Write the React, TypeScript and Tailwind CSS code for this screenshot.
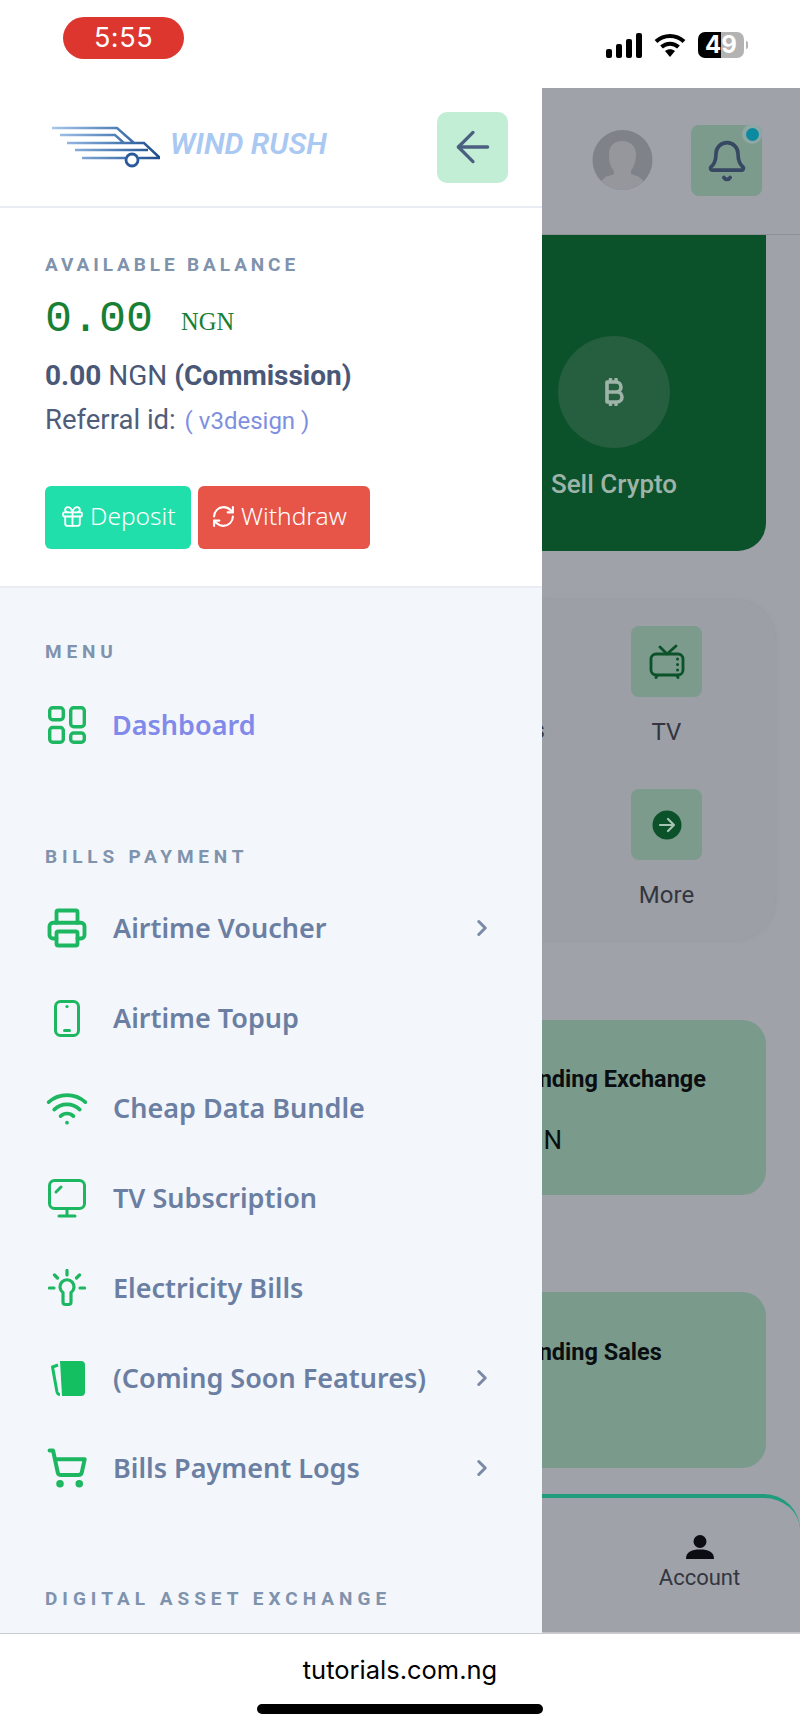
import React from "react";
import { ArrowLeft, Bell, ChevronRight, Gift, Printer, RefreshCw, ShoppingCart, Wifi } from "lucide-react";

const green = "#1cb760";
const DashIcon = () => (
  <svg width="38" height="38" viewBox="0 0 38 38" fill="none" stroke={green} strokeWidth="3.400" strokeLinejoin="round">
    <rect x="1.700" y="1.700" width="13.600" height="12" rx="3" />
    <rect x="22.700" y="1.700" width="13.600" height="19" rx="3" />
    <rect x="1.700" y="21.500" width="13.600" height="14.800" rx="3" />
    <rect x="22.700" y="27" width="13.600" height="9.300" rx="3" />
  </svg>
);
const Phone = () => (
  <svg width="26" height="37" viewBox="0 0 26 37" fill="none" stroke={green} strokeWidth="3" strokeLinecap="round">
    <rect x="1.500" y="1.500" width="23" height="34" rx="5" />
    <path d="M13 6.500h.01" strokeWidth="3.200" />
    <path d="M10.500 30.500h5" strokeWidth="3" />
  </svg>
);
const Monitor = () => (
  <svg width="38" height="39" viewBox="0 0 38 39" fill="none" stroke={green} strokeWidth="3" strokeLinecap="round" strokeLinejoin="round">
    <rect x="1.500" y="1.500" width="35" height="28" rx="5" />
    <path d="M19 30v6.500M11 37h16M8 13l5-5" />
  </svg>
);
const Bulb = () => (
  <svg width="38" height="38" viewBox="0 0 38 38" fill="none" stroke={green} strokeWidth="3.200" strokeLinecap="round" strokeLinejoin="round">
    <path d="M19 1.500v4.500M6.500 6l3 3M31.500 6l-3 3M1.500 19h4.500M32 19h4.500" />
    <path d="M15 27v-3.500a7 7 0 1 1 8 0V27v6a2.500 2.500 0 0 1-2.500 2.500h-3A2.500 2.500 0 0 1 15 33z" />
  </svg>
);
const Cards = () => (
  <svg width="34" height="35" viewBox="0 0 34 35">
    <path d="M9 0h21a4 4 0 0 1 4 4v27a4 4 0 0 1-4 4H11z" fill="#14bf62" />
    <path d="M7 4 1.500 6l4.500 25c.5 2 2 2.500 3 2.500" fill="none" stroke="#14bf62" strokeWidth="3" strokeLinejoin="round" />
  </svg>
);
const Logo = () => (
  <svg width="108" height="42" viewBox="0 0 108 42" fill="none" strokeWidth="2.400">
    <defs>
      <linearGradient id="w" gradientUnits="userSpaceOnUse" x1="0" y1="0" x2="108" y2="0">
        <stop offset="0" stopColor="#a9c6ea" />
        <stop offset="0.6" stopColor="#4f7fb8" />
        <stop offset="1" stopColor="#1d4a8c" />
      </linearGradient>
    </defs>
    <path stroke="url(#w)" d="M0 2h65l17 15h10l16 15H87M8 9h55l9 8M15 17h77M23 24h73M30 32h43" />
    <circle cx="80" cy="34" r="6" stroke="#2a5a9c" strokeWidth="2.800" fill="#fff" />
  </svg>
);
const Avatar = () => (
  <svg width="61" height="60" viewBox="0 0 61 60">
    <circle cx="30.500" cy="30" r="30" fill="#7f8288" />
    <clipPath id="av"><circle cx="30.500" cy="30" r="30" /></clipPath>
    <g clipPath="url(#av)">
      <path d="M5 60c2-12 12-14 17-16v-3c-5-6-5-13-5-17 0-9 6-13 13-13s14 4 14 13c0 5-1 11-5 17v3c6 2 14 4 17 16z" fill="#95979c" />
      <path d="M14 46 30 53l16-7 10 14H5z" fill="#95979c" />
    </g>
  </svg>
);
const TvIcon = () => (
  <svg width="36" height="35" viewBox="0 0 36 35" fill="none" stroke="#0b5129" strokeWidth="2.800" strokeLinecap="round" strokeLinejoin="round">
    <rect x="2" y="10" width="32" height="21" rx="5" />
    <path d="M11 3l7 7 9-8M7 33.500l1-2M29 33.500l-1-2" />
    <path d="M28.500 15h.01M28.500 20.500h.01M28.500 26h.01" strokeWidth="3" />
  </svg>
);
const MoreIcon = () => (
  <svg width="30" height="30" viewBox="0 0 30 30" fill="none" stroke="#a6c4b4" strokeWidth="2.200" strokeLinecap="round" strokeLinejoin="round">
    <circle cx="15" cy="15" r="14.500" fill="#0b5129" stroke="none" />
    <path d="M8 15h14M16 9l6 6-6 6" />
  </svg>
);
const Btc = () => (
  <svg width="20" height="28" viewBox="0 0 20 28" fill="none" stroke="#9fb4a8" strokeWidth="3.600" strokeLinejoin="round" strokeLinecap="round">
    <path d="M3 4h9a4.500 4.500 0 0 1 0 10H3zM3 14h10a5 5 0 0 1 0 10H3zM3 4v20M6.500 1.500v2.500M12 1.500v2.500M6.500 24v2.500M12 24v2.500" />
  </svg>
);
const UserIcon = () => (
  <svg width="28" height="24" viewBox="0 0 28 24" fill="#0b0d12">
    <circle cx="14" cy="6.500" r="6.500" />
    <path d="M0 24c0-7 5-9.500 14-9.500S28 17 28 24z" />
  </svg>
);

const bills = [
  { icon: <Printer size={42} color={green} strokeWidth={2.200} className="-ml-[2px]" />, label: "Airtime Voucher", arrow: true },
  { icon: <div className="pl-[6px]"><Phone /></div>, label: "Airtime Topup" },
  { icon: <Wifi size={44} color={green} strokeWidth={2} className="-ml-[3px]" />, label: "Cheap Data Bundle" },
  { icon: <Monitor />, label: "TV Subscription" },
  { icon: <Bulb />, label: "Electricity Bills" },
  { icon: <div className="pl-[3px]"><Cards /></div>, label: "(Coming Soon Features)", arrow: true },
  { icon: <ShoppingCart size={42} color={green} strokeWidth={2.300} className="-ml-[2px]" />, label: "Bills Payment Logs", arrow: true },
];

const Label = ({ children, className }: { children: React.ReactNode; className: string }) => (
  <div className={`text-[19px] leading-[22px] font-bold text-[#8093ac] whitespace-nowrap font-['Roboto',sans-serif] ${className}`}>{children}</div>
);

export default function App() {
  return (
    <div className="w-[800px] h-[1730px] flex flex-col bg-white overflow-hidden font-['Roboto',sans-serif]">
      <div className="h-[88px] shrink-0 flex items-start justify-between pt-[17px] pl-[63px] pr-[52px]">
        <div className="w-[121px] h-[42px] rounded-[21px] bg-[#dc362e] flex items-center justify-center text-white text-[27px] tracking-[0.02em] font-['Inter',sans-serif]">5:55</div>
        <div className="flex items-center gap-[12px] mt-[15px]">
          <svg width="36" height="25" viewBox="0 0 36 25" fill="#000">
            <rect x="0" y="16" width="6" height="9" rx="2" />
            <rect x="10" y="11" width="6" height="14" rx="2" />
            <rect x="20" y="6" width="6" height="19" rx="2" />
            <rect x="30" y="0" width="6" height="25" rx="2" />
          </svg>
          <svg width="32" height="24" viewBox="0 0 32 24" fill="none" stroke="#000" strokeWidth="4">
            <path d="M2 8.500c8-7.500 20-7.500 28 0M7.500 14c5-4.500 12-4.500 17 0" />
            <path d="M16 24l-5-6c3-2.500 7-2.500 10 0z" fill="#000" stroke="none" />
          </svg>
          <div className="flex items-center gap-[2px]">
            <div className="w-[46px] h-[26px] rounded-[7px] bg-[linear-gradient(90deg,#000_50%,#b3b3b3_50%)] flex items-center justify-center text-white font-bold text-[24px] font-['Inter',sans-serif]">49</div>
            <div className="w-[2px] h-[8px] rounded-r bg-[#b3b3b3]" />
          </div>
        </div>
      </div>

      <div className="flex-1 flex min-h-0">
        <aside className="w-[542px] shrink-0 bg-[#f3f6fb] overflow-hidden flex flex-col">
          <div className="h-[120px] shrink-0 bg-white border-b-2 border-[#e9ecf2] flex items-center justify-between pl-[52px] pr-[34px]">
            <div className="flex items-center gap-[10px]">
              <Logo />
              <span className="text-[30px] leading-[36px] mb-[6px] font-semibold italic text-[#a9c8f2] whitespace-nowrap">WIND RUSH</span>
            </div>
            <div className="w-[71px] h-[71px] rounded-[10px] bg-[#c3eed6] flex items-center justify-center">
              <ArrowLeft size={50} color="#4b6080" strokeWidth={1.600} />
            </div>
          </div>

          <div className="h-[380px] shrink-0 bg-white border-b-2 border-[#e9ecf2] pl-[45px] pt-[46px]">
            <Label className="tracking-[3.900px]">AVAILABLE BALANCE</Label>
            <div className="flex items-baseline mt-[18px] text-[#178034]">
              <span className="font-['Liberation_Mono',monospace] text-[45px] leading-[52px]">0.00</span>
              <span className="font-['Liberation_Serif',serif] text-[24.5px] ml-[28px] relative -top-[1px]">NGN</span>
            </div>
            <div className="text-[28px] leading-[36px] mt-[12px] text-[#4a5878] whitespace-nowrap">
              <b>0.00</b> NGN <b>(Commission)</b>
            </div>
            <div className="text-[27.5px] leading-[36px] mt-[8px] text-[#4f5d7a] whitespace-nowrap">
              Referral id: <span className="text-[24px] text-[#7f8fdf] ml-[2px]">( v3design )</span>
            </div>
            <div className="flex gap-[7px] mt-[47px]">
              <div className="w-[146px] h-[63px] pb-[3px] pl-[15px] rounded-[6px] bg-[#20dfaa] flex items-center gap-[5px] text-white text-[24.5px] font-['Noto_Sans',sans-serif] font-light">
                <Gift size={25} strokeWidth={1.800} />Deposit
              </div>
              <div className="w-[172px] h-[63px] pb-[3px] pl-[13px] rounded-[6px] bg-[#e65548] flex items-center gap-[5px] text-white text-[24.5px] font-['Noto_Sans',sans-serif] font-light">
                <RefreshCw size={25} strokeWidth={2} />Withdraw
              </div>
            </div>
          </div>

          <div className="pl-[45px] pr-[47px] pt-[53px] font-['Noto_Sans',sans-serif]">
            <Label className="tracking-[4.800px]">MENU</Label>
            <div className="h-[90px] mt-[17px] flex items-center">
              <div className="w-[67px] shrink-0 pl-[3px]"><DashIcon /></div>
              <span className="text-[27px] font-semibold text-[#8189ea]">Dashboard</span>
            </div>
            <Label className="tracking-[4.800px] mt-[76px]">BILLS PAYMENT</Label>
            <div className="mt-[15px] flex flex-col">
              {bills.map((b) => (
                <div key={b.label} className="h-[90px] flex items-center">
                  <div className="w-[68px] shrink-0 flex justify-start pl-[3px]">{b.icon}</div>
                  <span className="flex-1 text-[27px] font-semibold text-[#6b7fa3] whitespace-nowrap">{b.label}</span>
                  {b.arrow && <ChevronRight size={26} color="#7a8aa6" strokeWidth={2.800} />}
                </div>
              ))}
            </div>
            <Label className="tracking-[5px] mt-[75px]">DIGITAL ASSET EXCHANGE</Label>
          </div>
        </aside>

        <main className="flex-1 min-w-0 bg-[#9fa2a9] overflow-hidden flex flex-col border-b border-[#c4c6ca]">
          <div className="h-[147px] shrink-0 border-b border-[#8e9197] flex items-start pt-[37px]">
            <div className="ml-[50px] mt-[5px]"><Avatar /></div>
            <div className="relative ml-[38px] w-[71px] h-[71px] rounded-[8px] bg-[#7c9b8c] flex items-center justify-center">
              <Bell size={44} color="#374863" strokeWidth={2} />
              <div className="absolute -top-[1px] right-0 w-[20px] h-[20px] rounded-full bg-[#8fa8a6] flex items-center justify-center">
                <div className="w-[13px] h-[13px] rounded-full bg-[#0c8aa0]" />
              </div>
            </div>
          </div>

          <div className="h-[316px] shrink-0 mr-[34px] bg-[#0b5129] rounded-br-[28px] pt-[101px] pl-[10px] flex flex-col items-start">
            <div className="w-[124px] flex flex-col items-center">
              <div className="w-[112px] h-[112px] rounded-full bg-[#265e40] flex items-center justify-center"><Btc /></div>
              <div className="mt-[21px] text-[26px] leading-[30px] text-[#9fb4a8] font-medium whitespace-nowrap">Sell Crypto</div>
            </div>
          </div>

          <div className="h-[340px] shrink-0 mt-[49px] mr-[25px] rounded-r-[40px] bg-[#9c9fa6] shadow-[0_0_4px_rgba(130,133,140,0.3)] pt-[26px] text-[#33363f] text-[24px] leading-[28px] flex">
            <div className="w-[3px] h-[120px] flex justify-end items-end shrink-0">
              <span className="mb-[2px]">Bills</span>
            </div>
            <div className="flex flex-col items-center ml-[86px] w-[71px]">
              <div className="w-[71px] h-[71px] rounded-[8px] bg-[#7c9b8c] flex items-center justify-center"><TvIcon /></div>
              <div className="mt-[21px]">TV</div>
              <div className="mt-[43px] w-[71px] h-[71px] rounded-[8px] bg-[#7c9b8c] flex items-center justify-center"><MoreIcon /></div>
              <div className="mt-[21px]">More</div>
            </div>
          </div>

          <div className="h-[175px] shrink-0 mt-[80px] mr-[34px] rounded-r-[24px] bg-[#7a9a8b] pt-[44px] text-[23.5px] leading-[30px] text-[#0a0e10] whitespace-nowrap">
            <div className="font-bold -ml-[31px]">Pending Exchange</div>
            <div className="mt-[31px] -ml-[92px] text-[26px]">0.00 NGN</div>
          </div>

          <div className="h-[176px] shrink-0 mt-[97px] mr-[34px] rounded-r-[24px] bg-[#7a9a8b] pt-[45px] text-[23.5px] leading-[30px] text-[#0a0e10] whitespace-nowrap">
            <div className="font-bold -ml-[31px]">Pending Sales</div>
          </div>

          <div className="flex-1 mt-[26px] border-t-4 border-[#1f9c7c] rounded-tr-[36px] flex flex-col items-center pl-[57px] pt-[37px]">
            <UserIcon />
            <div className="mt-[6px] text-[22px] leading-[26px] text-[#33363f]">Account</div>
          </div>
        </main>
      </div>

      <div className="h-[97px] shrink-0 bg-white border-t border-[#c9cbcf] flex flex-col items-center">
        <div className="mt-[21px] text-[25.5px] leading-[30px] text-black font-['Inter',sans-serif]">tutorials.com.ng</div>
        <div className="mt-[19px] w-[286px] h-[10px] rounded-full bg-black" />
      </div>
    </div>
  );
}
